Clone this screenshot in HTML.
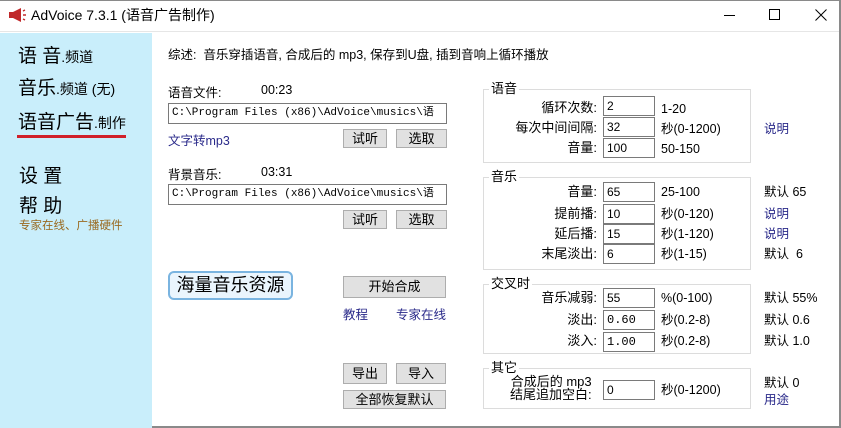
<!DOCTYPE html>
<html><head><meta charset="utf-8"><style>
*{margin:0;padding:0;box-sizing:border-box}
body{width:841px;height:428px;overflow:hidden;background:#fff;font-family:"Liberation Sans","Noto Sans CJK SC",sans-serif;font-size:12px;color:#000;position:relative}
.a{position:absolute;white-space:nowrap}
.title{left:0;top:0;width:841px;height:32px;background:#fff;border-bottom:1px solid #e6e6e6}
.side{left:0;top:33px;width:152px;height:395px;background:#c9eefb}
.big{font-size:19px;line-height:22px}
.big small{font-size:14px}
.inp{position:absolute;border:1px solid #7a7a7a;background:#fff;height:20px;font-size:12px;padding:1px 3px;line-height:16px;white-space:nowrap;overflow:hidden}
.mono{font-family:"Liberation Mono","Noto Sans CJK SC",monospace;font-size:11px}
.btn{position:absolute;background:#e1e1e1;border:1px solid #adadad;text-align:center;font-size:13px;line-height:17px}
.grp{position:absolute;border:1px solid #dcdcdc}
.gl{position:absolute;background:#fff;padding:0 2px;font-size:13px;line-height:14px}
.lab{position:absolute;text-align:right;width:130px;font-size:13px;line-height:16px}
.rng{position:absolute;font-size:12.5px;line-height:16px;white-space:nowrap}
.lnk{color:#2a2a8a}
</style></head><body>
<div class="a title"></div>
<div class="a" style="left:839px;top:0;width:2px;height:428px;background:#8a8a8a"></div>
<div class="a" style="left:0;top:0;width:841px;height:1px;background:#8a8a8a"></div>
<div class="a" style="left:0;top:426px;width:841px;height:2px;background:#8a8a8a"></div>
<svg class="a" style="left:8px;top:8px" width="18" height="14" viewBox="0 0 18 14"><path d="M1 4h4l8-4v14l-8-4H1z" fill="#c0282a"/><path d="M15 3l2-1M15 7h3M15 11l2 1" stroke="#c0282a" stroke-width="1.4"/></svg>
<div class="a" style="left:31px;top:6px;font-size:14px;line-height:18px">AdVoice 7.3.1 (语音广告制作)</div>
<div class="a" style="left:724px;top:15px;width:11px;height:1px;background:#000"></div>
<div class="a" style="left:769px;top:9px;width:11px;height:11px;border:1px solid #000"></div>
<svg class="a" style="left:815px;top:9px" width="12" height="12"><path d="M0.5 0.5l11 11M11.5 0.5l-11 11" stroke="#000" stroke-width="1"/></svg>

<div class="a side"></div>
<div class="a big" style="left:18px;top:46px">语 音<small>.频道</small></div>
<div class="a big" style="left:18px;top:78px">音乐<small>.频道 (无)</small></div>
<div class="a big" style="left:18px;top:112px">语音广告<small>.制作</small></div>
<div class="a" style="left:17px;top:135px;width:109px;height:3px;background:#d0202a"></div>
<div class="a big" style="left:19px;top:166px">设 置</div>
<div class="a big" style="left:19px;top:196px">帮 助</div>
<div class="a" style="left:19px;top:217px;font-size:11.5px;color:#9a6a20">专家在线、广播硬件</div>

<div class="a" style="left:168px;top:44px;font-size:12.5px">综述:&nbsp; 音乐穿插语音, 合成后的 mp3, 保存到U盘, 插到音响上循环播放</div>
<div class="a" style="left:168px;top:82px;font-size:12.5px">语音文件:</div>
<div class="a" style="left:261px;top:83px;font-size:12.5px">00:23</div>
<div class="inp mono" style="left:168px;top:103px;width:279px;height:21px;line-height:17px">C:\Program Files (x86)\AdVoice\musics\语</div>
<div class="a lnk" style="left:168px;top:130px;font-size:12.5px">文字转mp3</div>
<div class="btn" style="left:343px;top:129px;width:44px;height:19px">试听</div>
<div class="btn" style="left:396px;top:129px;width:51px;height:19px">选取</div>
<div class="a" style="left:168px;top:164px;font-size:12.5px">背景音乐:</div>
<div class="a" style="left:261px;top:165px;font-size:12.5px">03:31</div>
<div class="inp mono" style="left:168px;top:184px;width:279px;height:21px;line-height:17px">C:\Program Files (x86)\AdVoice\musics\语</div>
<div class="btn" style="left:343px;top:210px;width:44px;height:19px">试听</div>
<div class="btn" style="left:396px;top:210px;width:51px;height:19px">选取</div>
<div class="a" style="left:168px;top:271px;width:125px;height:29px;border:2px solid #7ab4e0;border-radius:6px;background:#eaf5fd;font-size:18px;line-height:24px;text-align:center">海量音乐资源</div>
<div class="btn" style="left:343px;top:276px;width:103px;height:22px;line-height:20px">开始合成</div>
<div class="a lnk" style="left:343px;top:304px;font-size:12.5px">教程</div>
<div class="a lnk" style="left:396px;top:304px;font-size:12.5px">专家在线</div>
<div class="btn" style="left:343px;top:363px;width:44px;height:21px;line-height:19px">导出</div>
<div class="btn" style="left:396px;top:363px;width:50px;height:21px;line-height:19px">导入</div>
<div class="btn" style="left:343px;top:390px;width:103px;height:19px">全部恢复默认</div>

<div class="grp" style="left:483px;top:89px;width:268px;height:74px"></div>
<div class="gl" style="left:489px;top:82px">语音</div>
<div class="lab" style="left:467px;top:100px">循环次数:</div><div class="inp" style="left:603px;top:96px;width:52px">2</div><div class="rng" style="left:661px;top:101px">1-20</div>
<div class="lab" style="left:467px;top:120px">每次中间间隔:</div><div class="inp" style="left:603px;top:117px;width:52px">32</div><div class="rng" style="left:661px;top:121px">秒(0-1200)</div><div class="rng lnk" style="left:764px;top:121px">说明</div>
<div class="lab" style="left:467px;top:140px">音量:</div><div class="inp" style="left:603px;top:138px;width:52px">100</div><div class="rng" style="left:661px;top:141px">50-150</div>

<div class="grp" style="left:483px;top:177px;width:268px;height:93px"></div>
<div class="gl" style="left:489px;top:170px">音乐</div>
<div class="lab" style="left:467px;top:184px">音量:</div><div class="inp" style="left:603px;top:182px;width:52px">65</div><div class="rng" style="left:661px;top:184px">25-100</div><div class="rng" style="left:764px;top:184px">默认 65</div>
<div class="lab" style="left:467px;top:206px">提前播:</div><div class="inp" style="left:603px;top:204px;width:52px">10</div><div class="rng" style="left:661px;top:206px">秒(0-120)</div><div class="rng lnk" style="left:764px;top:206px">说明</div>
<div class="lab" style="left:467px;top:226px">延后播:</div><div class="inp" style="left:603px;top:224px;width:52px">15</div><div class="rng" style="left:661px;top:226px">秒(1-120)</div><div class="rng lnk" style="left:764px;top:226px">说明</div>
<div class="lab" style="left:467px;top:246px">末尾淡出:</div><div class="inp" style="left:603px;top:244px;width:52px">6</div><div class="rng" style="left:661px;top:246px">秒(1-15)</div><div class="rng" style="left:764px;top:246px">默认&nbsp; 6</div>

<div class="grp" style="left:483px;top:284px;width:268px;height:70px"></div>
<div class="gl" style="left:489px;top:277px">交叉时</div>
<div class="lab" style="left:467px;top:290px">音乐减弱:</div><div class="inp" style="left:603px;top:288px;width:52px">55</div><div class="rng" style="left:661px;top:290px">%(0-100)</div><div class="rng" style="left:764px;top:290px">默认 55%</div>
<div class="lab" style="left:467px;top:312px">淡出:</div><div class="inp mono" style="left:603px;top:310px;width:52px;font-size:12px">0.60</div><div class="rng" style="left:661px;top:312px">秒(0.2-8)</div><div class="rng" style="left:764px;top:312px">默认 0.6</div>
<div class="lab" style="left:467px;top:333px">淡入:</div><div class="inp mono" style="left:603px;top:332px;width:52px;font-size:12px">1.00</div><div class="rng" style="left:661px;top:333px">秒(0.2-8)</div><div class="rng" style="left:764px;top:333px">默认 1.0</div>

<div class="grp" style="left:483px;top:368px;width:268px;height:41px"></div>
<div class="gl" style="left:489px;top:361px">其它</div>
<div class="a" style="left:510px;top:375px;font-size:13px;line-height:13px;text-align:right">合成后的 mp3<br>结尾追加空白:</div>
<div class="inp" style="left:603px;top:380px;width:52px">0</div><div class="rng" style="left:661px;top:382px">秒(0-1200)</div>
<div class="rng" style="left:764px;top:375px">默认 0</div><div class="rng lnk" style="left:764px;top:392px">用途</div>
</body></html>
